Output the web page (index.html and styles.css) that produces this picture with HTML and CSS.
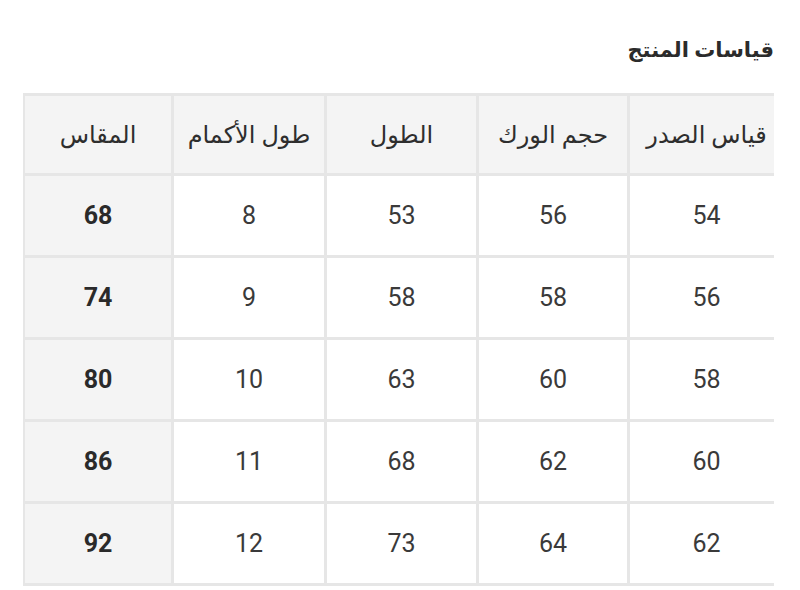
FILE: index.html
```html
<!DOCTYPE html>
<html lang="ar" dir="rtl">
<head>
<meta charset="utf-8">
<link rel="stylesheet" href="styles.css">
</head>
<body>
<div class="page">
  <h2 class="title">قياسات المنتج</h2>
  <div class="table-clip">
    <table class="sizes">
      <thead>
        <tr><th>قياس الصدر</th><th>حجم الورك</th><th>الطول</th><th>طول الأكمام</th><th class="size">المقاس</th></tr>
      </thead>
      <tbody>
        <tr><td>54</td><td>56</td><td>53</td><td>8</td><td class="size">68</td></tr>
        <tr><td>56</td><td>58</td><td>58</td><td>9</td><td class="size">74</td></tr>
        <tr><td>58</td><td>60</td><td>63</td><td>10</td><td class="size">80</td></tr>
        <tr><td>60</td><td>62</td><td>68</td><td>11</td><td class="size">86</td></tr>
        <tr><td>62</td><td>64</td><td>73</td><td>12</td><td class="size">92</td></tr>
      </tbody>
    </table>
  </div>
</div>
</body>
</html>
```

FILE: styles.css
```css
html, body {
  margin: 0;
  padding: 0;
  background: #ffffff;
}
body {
  font-family: Roboto, "DejaVu Sans", sans-serif;
  color: #333333;
}
.page {
  padding: 34px 26px 0 26px;
}
.title {
  margin: 0 0 27px 0;
  font-size: 21px;
  font-weight: 600;
  line-height: 32px;
  color: #2b2b2b;
}
.table-clip {
  width: 748px;
  margin-left: -3px;
  padding: 2px 0 2px 3px;
  overflow: hidden;
}
.sizes {
  width: 760px;
  margin-right: -12px;
  margin-top: -2px;
  table-layout: fixed;
  border-collapse: collapse;
}
.sizes th,
.sizes td {
  border: 3px solid #e6e6e6;
  text-align: center;
  vertical-align: middle;
  padding: 0;
}
.sizes tr > :nth-child(1) { width: 153px; }
.sizes tr > :nth-child(2) { width: 148px; }
.sizes tr > :nth-child(3) { width: 149px; }
.sizes tr > :nth-child(4) { width: 150px; }
.sizes tr > :nth-child(5) { width: 146px; }
.sizes th {
  height: 77px;
  background: #f4f4f4;
  font-size: 24px;
  font-weight: 400;
  color: #2e2e2e;
}
.sizes td {
  height: 79px;
  font-size: 25px;
  color: #3a3a3a;
}
.sizes td.size {
  background: #f4f4f4;
  font-weight: 700;
  color: #2a2a2a;
}
```
